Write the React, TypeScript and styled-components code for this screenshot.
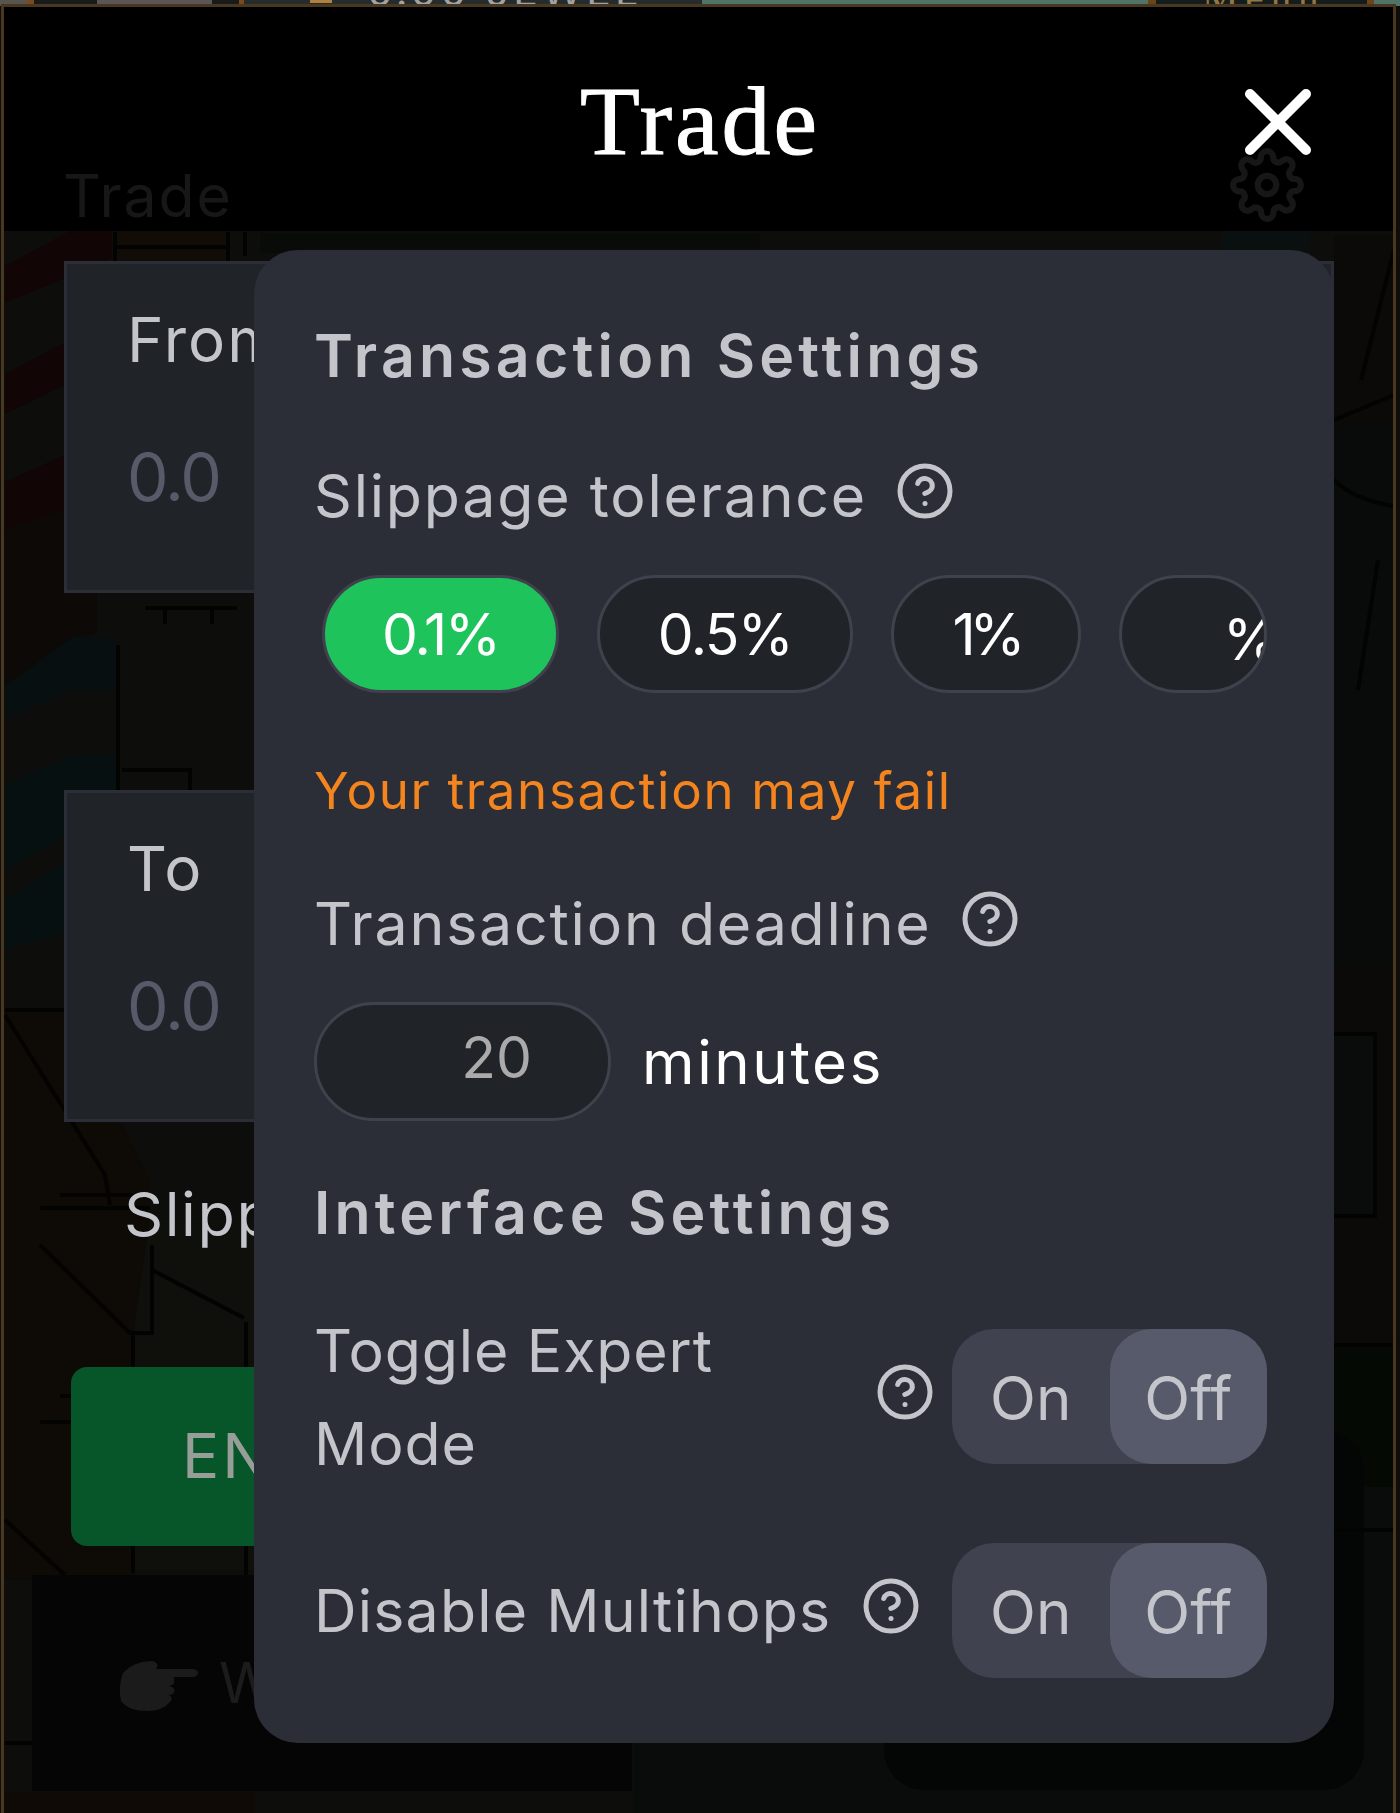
import React, { useState } from "react";
import styled, { createGlobalStyle } from "styled-components";
import { FiHelpCircle, FiSettings } from "react-icons/fi";

const GlobalStyle = createGlobalStyle`
  * {
    box-sizing: border-box;
  }

  body {
    margin: 0;
    background: #000;
    font-family: "Inter", sans-serif;
  }
`;

const ranges = [
  { label: "0.1%", width: 237, spacing: -2 },
  { label: "0.5%", width: 256, spacing: -1.6 },
  { label: "1%", width: 190, spacing: -6 },
];

// Game world that shimmers through behind the trade window
function Scene() {
  return (
    <SceneSvg viewBox="0 0 1400 1813">
      <rect width="1400" height="1813" fill="#0d0d0b" />
      <path d="M5 266L72 230h40v28L5 303zM5 374l60-32v43L5 414zM5 482l60-27v55L5 530z" fill="#120506" />
      <path d="M116 230h112v30H116z" fill="#110c05" />
      <path d="M5 530l60-20v82H5zM5 592h92v40l-25 8-67 46z" fill="#0c0907" />
      <path d="M5 686l67-48q25-6 45 5v47H72L5 720z" fill="#080f10" />
      <path d="M5 785l67-30h45v35l-52 46-60 34zM5 900l60-38v70L5 950z" fill="#071011" />
      <path d="M5 1010h60l85 170v120l-15 20v260H5z" fill="#0e0a06" />
      <path d="M150 1220h105v350H135v-250z" fill="#0f0f0c" />
      <path d="M5 1792h250v21H5z" fill="#0f0a05" />
      <path d="M260 233h500v20H260z" fill="#090b08" />
      <path d="M1222 230h88v30h-88z" fill="#0a1010" />
      <path d="M1334 235h60v190h-60z" fill="#0c0a08" />
      <path d="M1334 425h60v545h-60z" fill="#090a0a" />
      <path d="M1334 970h60v375h-60z" fill="#0c0a09" />
      <path d="M1334 1036h41v180h-41z" fill="#0a0b0b" />
      <path d="M1334 1346h60v141h-60z" fill="#040a03" />
      <path d="M1334 1487h60v326H633v-70h701z" fill="#090c0b" />
      <rect x="884" y="1430" width="480" height="360" rx="40" fill="#040606" />
      <g fill="none" stroke="#030302" strokeWidth="4">
        <path d="M115 232v30M228 232v30M115 247h113M245 232v24M118 645v145M122 770h68v20M145 608h92M165 608v16M212 608v16" />
        <path d="M40 1208h110M60 1195h90M40 1245l90 88h22v-88M40 1422h115M60 1396h95v140M5 1520l60 55M5 1010h60" />
        <path d="M5 1015l100 160 5 30M246 1322v253M152 1270l92 48M133 1333v240M5 1743h28" />
        <path d="M1394 250l-33 130M1334 420l60-25M1358 690l20-130M1334 1034h41v182h-41M1334 1345h60M1334 1530h60M1334 480q20 20 60 26" />
      </g>
    </SceneSvg>
  );
}

function Help({ label }: { label: string }) {
  return (
    <HelpButton aria-label={label}>
      <FiHelpCircle />
    </HelpButton>
  );
}

function Switch() {
  const [on, setOn] = useState(false);

  return (
    <SwitchButton onClick={() => setOn(!on)}>
      <SwitchSide $active={on}>On</SwitchSide>
      <SwitchSide $active={!on}>Off</SwitchSide>
    </SwitchButton>
  );
}

function App() {
  const [range, setRange] = useState("0.1%");

  return (
    <>
      <GlobalStyle />
      <Page>
        <Scene />
        <Hud>
          <HudPortrait />
          <HudCoin />
          <HudText>0.00 JEWEL</HudText>
          <HudMenu>Menu</HudMenu>
        </Hud>
        <Window>
          <WindowHeader>
            <DimTitle>Trade</DimTitle>
            <FiSettings />
          </WindowHeader>
          <CurrencyBox>
            <BoxLabel>From</BoxLabel>
            <BoxAmount>0.0</BoxAmount>
          </CurrencyBox>
          <CurrencyBox $second>
            <BoxLabel>To</BoxLabel>
            <BoxAmount>0.0</BoxAmount>
          </CurrencyBox>
          <SlippageLine>Slipp</SlippageLine>
          <EnterButton>EN</EnterButton>
          <Notice>
            <svg viewBox="0 0 78 50">
              <path d="M3 12Q14 0 32 0q8 2 4 8h37q5 1 5 4t-5 4H54v6q-2 3-6 3 8 1 6 6-1 3-5 3 5 3 1 7-8 9-22 9Q8 50 1 40-2 24 3 12z" />
            </svg>
            <span>W</span>
          </Notice>
        </Window>
        <WindowTitle>Trade</WindowTitle>
        <CloseButton aria-label="Close">
          <svg viewBox="0 0 68 68">
            <path d="M6 6l56 56M62 6L6 62" />
          </svg>
        </CloseButton>
        <Panel>
          <Heading>Transaction Settings</Heading>
          <LabelRow $height={70} $top={68}>
            <Label>Slippage tolerance</Label>
            <Help label="Slippage tolerance" />
          </LabelRow>
          <Pills>
            {ranges.map((item) => (
              <Pill
                key={item.label}
                $width={item.width}
                $spacing={item.spacing}
                $active={item.label === range}
                onClick={() => setRange(item.label)}
              >
                {item.label}
              </Pill>
            ))}
            <CustomPill>
              <span>%</span>
            </CustomPill>
          </Pills>
          <Warning>Your transaction may fail</Warning>
          <LabelRow $height={70} $top={67}>
            <Label>Transaction deadline</Label>
            <Help label="Transaction deadline" />
          </LabelRow>
          <DeadlineRow>
            <DeadlineInput>20</DeadlineInput>
            <Minutes>minutes</Minutes>
          </DeadlineRow>
          <Heading $top={56}>Interface Settings</Heading>
          <ToggleRow $height={187} $top={54}>
            <Label $spacing={0.9} $width={561}>
              Toggle Expert
              <br />
              Mode
            </Label>
            <Help label="Toggle Expert Mode" />
            <Switch />
          </ToggleRow>
          <ToggleRow $height={135} $top={53}>
            <Label $spacing={1.2} $width={547}>Disable Multihops</Label>
            <Help label="Disable Multihops" />
            <Switch />
          </ToggleRow>
        </Panel>
      </Page>
    </>
  );
}

const Page = styled.div`
  position: relative;
  width: 1400px;
  height: 1813px;
  overflow: hidden;
  background: #000;
`;

const SceneSvg = styled.svg`
  position: absolute;
  inset: 0;
`;

const Hud = styled.div`
  position: absolute;
  inset: 0 0 auto;
  height: 6px;
  overflow: hidden;
  background: linear-gradient(
    90deg,
    #5a5450 0 27px,
    #7b4a1c 27px 34px,
    #191a1a 34px 239px,
    #7b4a1c 239px 244px,
    #262b2b 244px 702px,
    #4f7468 702px 1148px,
    #6b4519 1148px 1156px,
    #151d1c 1156px 1367px,
    #6b4519 1367px 1374px,
    #4f7468 1374px
  );
`;

const HudPortrait = styled.div`
  position: absolute;
  left: 97px;
  width: 115px;
  height: 4px;
  background: #5b5557;
`;

const HudCoin = styled.div`
  position: absolute;
  left: 310px;
  width: 22px;
  height: 3px;
  background: #b2803e;
`;

const HudText = styled.div`
  position: absolute;
  left: 367px;
  bottom: -3px;
  color: #a3a3a3;
  font-size: 41px;
  line-height: 36px;
  letter-spacing: 4px;
  white-space: nowrap;
`;

const HudMenu = styled(HudText)`
  left: 1202px;
  bottom: -9px;
  color: #927745;
  font-family: "Liberation Serif", serif;
  letter-spacing: 7px;
`;

const Window = styled.div`
  position: absolute;
  inset: 4px 4px 0 1px;
  display: flex;
  flex-direction: column;
  padding: 0 60px;
  border: 3px solid #493720;
  border-bottom: none;
`;

const WindowHeader = styled.div`
  display: flex;
  flex: none;
  justify-content: space-between;
  height: 224px;
  margin: 0 -60px 30px;
  padding: 141px 89px 0 59px;
  background: #000;
  color: #171717;

  svg {
    width: 74px;
    height: 74px;
  }
`;

const DimTitle = styled.div`
  padding-top: 3px;
  font-size: 59px;
  line-height: 90px;
  letter-spacing: 1.8px;
`;

const CurrencyBox = styled.div<{ $second?: boolean }>`
  flex: none;
  height: 332px;
  margin-top: ${(props) => (props.$second ? 197 : 0)}px;
  padding: 39px 60px;
  border: 3px solid #2b2e36;
  background: #202328;
  width: 1270px;
`;

const BoxLabel = styled.div`
  color: #c3c5cb;
  font-size: 62px;
  line-height: 74px;
  letter-spacing: 2px;
`;

const BoxAmount = styled.div`
  margin-top: 60px;
  color: #565a69;
  font-size: 66px;
  line-height: 80px;
  letter-spacing: -2px;
`;

const SlippageLine = styled.div`
  margin: 55px 0 0 60px;
  color: #c3c5cb;
  font-size: 61px;
  line-height: 74px;
  letter-spacing: 1.6px;
`;

const EnterButton = styled.button`
  flex: none;
  width: 600px;
  height: 179px;
  margin: 116px 0 0 7px;
  padding: 0 0 3px 111px;
  border: none;
  border-radius: 16px;
  background: #07562a;
  color: #979d98;
  font: 62px "Inter", sans-serif;
  letter-spacing: 3px;
  text-align: left;
`;

const Notice = styled.div`
  display: flex;
  align-items: center;
  gap: 21px;
  flex: none;
  width: 600px;
  height: 216px;
  margin: 29px 0 0 -32px;
  padding-left: 88px;
  background: #050505;
  color: #1c1c1c;
  font-size: 56px;

  svg {
    width: 78px;
    height: 50px;
    margin-top: 6px;
    fill: #1b1b1b;
  }
`;

const WindowTitle = styled.h1`
  position: absolute;
  inset: 65px 0 auto;
  margin: 0;
  color: #fff;
  font: 400 98px/112px "Liberation Serif", serif;
  letter-spacing: 3px;
  text-align: center;
  -webkit-text-stroke: 1px #fff;
`;

const CloseButton = styled.button`
  position: absolute;
  top: 88px;
  right: 88px;
  width: 68px;
  height: 68px;
  padding: 0;
  border: none;
  background: none;

  svg {
    display: block;
    fill: none;
    stroke: #fff;
    stroke-width: 10;
    stroke-linecap: round;
  }
`;

const Panel = styled.div`
  position: absolute;
  top: 250px;
  left: 254px;
  display: flex;
  flex-direction: column;
  width: 1080px;
  height: 1493px;
  padding: 70px 67px 0 60px;
  border-radius: 44px;
  background: #2b2e37;
  color: #c3c5cb;
`;

const Heading = styled.h2<{ $top?: number }>`
  margin: ${(props) => props.$top ?? 0}px 0 0;
  font-size: 59px;
  font-weight: 600;
  line-height: 72px;
  letter-spacing: 4.2px;
`;

const LabelRow = styled.div<{ $height: number; $top: number }>`
  display: flex;
  align-items: center;
  gap: 28px;
  height: ${(props) => props.$height}px;
  margin-top: ${(props) => props.$top}px;
`;

const Label = styled.div<{ $spacing?: number; $width?: number }>`
  flex: none;
  width: ${(props) => (props.$width ? props.$width + "px" : "auto")};
  font-size: 59px;
  line-height: 93px;
  letter-spacing: ${(props) => props.$spacing ?? 1.8}px;
`;

const HelpButton = styled.button`
  display: flex;
  flex: none;
  padding: 0;
  border: none;
  background: none;
  color: inherit;
  margin-top: -9px;

  svg {
    width: 60px;
    height: 60px;
  }
`;

const Pills = styled.div`
  display: flex;
  gap: 38px;
  margin: 45px 0 0 8px;
`;

const Pill = styled.button<{ $width: number; $spacing?: number; $active?: boolean }>`
  flex: none;
  width: ${(props) => props.$width}px;
  height: 118px;
  padding: 0;
  border: 3px solid #3f424d;
  border-radius: 59px;
  background: ${(props) => (props.$active ? "#1fc35c" : "#202328")};
  color: #fff;
  font: 57px "Inter", sans-serif;
  letter-spacing: ${(props) => props.$spacing ?? 0}px;
`;

const CustomPill = styled(Pill).attrs({ as: "div", $width: 148 })`
  display: flex;
  align-items: center;
  overflow: hidden;
  padding: 10px 0 0 101px;
`;

const Warning = styled.div`
  margin-top: 68px;
  color: #f3841e;
  font-size: 51px;
  line-height: 60px;
  letter-spacing: 1.7px;
`;

const DeadlineRow = styled.div`
  display: flex;
  align-items: center;
  gap: 31px;
  margin-top: 44px;
  color: #fff;
  font-size: 57px;
`;

const DeadlineInput = styled.div`
  width: 297px;
  height: 119px;
  padding-right: 76px;
  border: 3px solid #3f424d;
  border-radius: 60px;
  background: #202328;
  color: #a9aaa9;
  line-height: 106px;
  text-align: right;
`;

const Minutes = styled.span`
  font-size: 60px;
  letter-spacing: 2.6px;
`;

const ToggleRow = styled(LabelRow)`
  gap: 0;
`;

const SwitchButton = styled.button`
  display: flex;
  flex: none;
  width: 315px;
  height: 135px;
  margin-left: auto;
  padding: 0;
  border: none;
  border-radius: 42px;
  background: #40424f;
  color: #c3c5cb;
  font: 60px "Inter", sans-serif;
`;

const SwitchSide = styled.span<{ $active: boolean }>`
  display: flex;
  align-items: center;
  justify-content: center;
  width: 50%;
  height: 100%;
  padding-top: 2px;
  border-radius: 42px;
  background: ${(props) => (props.$active ? "#565a6b" : "transparent")};
`;

export default App;
